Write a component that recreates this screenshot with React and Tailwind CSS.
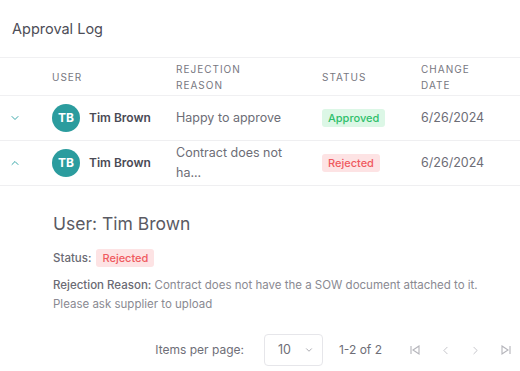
import React, { useState } from 'react';
import { ChevronDown, ChevronUp, ChevronLeft, ChevronRight } from 'lucide-react';

const rows = [
  { id: 1, name: 'Tim Brown', initials: 'TB', reason: 'Happy to approve', status: 'Approved', date: '6/26/2024' },
  { id: 2, name: 'Tim Brown', initials: 'TB', reason: 'Contract does not ha...', status: 'Rejected', date: '6/26/2024',
    full: 'Contract does not have the a SOW document attached to it. Please ask supplier to upload' },
];

const cols = 'grid grid-cols-[52px_124px_146px_99px_1fr]';

function Badge({ status }) {
  const approved = status === 'Approved';
  return (
    <span className={`inline-flex items-center h-[18px] px-[6px] rounded-[3px] text-[11px] font-medium ${approved ? 'bg-[#dcf7e6] text-[#2fbf6b]' : 'bg-[#fde3e4] text-[#ef5a5f]'}`}>
      {status}
    </span>
  );
}

export default function App() {
  const [open, setOpen] = useState(2);

  return (
    <div className="w-[520px] h-[371px] bg-white font-['Inter',sans-serif] text-[#55555f] overflow-hidden">
      <div className="h-[57px] flex items-center px-[12px]">
        <h1 className="text-[14.5px] text-[#4d4d57]">Approval Log</h1>
      </div>

      {/* header */}
      <div className={`${cols} h-[39px] items-center border-y border-[#f0f0f2] text-[10px] tracking-[0.1em] text-[#77777f] leading-[16px]`}>
        <div />
        <div>USER</div>
        <div>REJECTION<br />REASON</div>
        <div>STATUS</div>
        <div>CHANGE<br />DATE</div>
      </div>

      {rows.map((r) => (
        <div key={r.id}>
          <div className={`${cols} h-[45px] items-center border-b border-[#efeff1] text-[12.5px]`}>
            <button onClick={() => setOpen(open === r.id ? null : r.id)} className="pl-[9px] text-[#3aa8aa]">
              {open === r.id ? <ChevronUp size={12} strokeWidth={2} /> : <ChevronDown size={12} strokeWidth={2} />}
            </button>
            <div className="flex items-center gap-[9px]">
              <div className="w-[28px] h-[28px] rounded-full bg-[#2b9c9e] text-white text-[12px] font-bold flex items-center justify-center">
                {r.initials}
              </div>
              <span className="font-semibold text-[#4a4a55] text-[12px]">{r.name}</span>
            </div>
            <div className="leading-[20px] pr-[18px] text-[#6d6d76]">{r.reason}</div>
            <div><Badge status={r.status} /></div>
            <div className="text-[#6d6d76]">{r.date}</div>
          </div>

          {open === r.id && r.full && (
            <div className="pl-[53px] pr-[20px] pt-[25px] pb-[10px]">
              <div className="text-[17.5px] text-[#5a5a63]">User: {r.name}</div>
              <div className="flex items-center gap-[5px] mt-[12px] text-[11.5px] text-[#6a6a73]">
                <span className="font-medium">Status:</span>
                <Badge status={r.status} />
              </div>
              <div className="mt-[9px] text-[11.5px] leading-[19px] text-[#8a8a92]">
                <b className="font-medium text-[#6a6a73]">Rejection Reason:</b> {r.full}
              </div>
            </div>
          )}
        </div>
      ))}

      {/* pagination */}
      <div className="flex items-center justify-end pr-[7px] mt-[10px] text-[12px] text-[#6e6e77]">
        <span>Items per page:</span>
        <div className="ml-[20px] w-[59px] h-[32px] border border-[#e6e6ea] rounded-[4px] flex items-center pl-[13px] gap-[13px]">
          <span className="text-[12.5px]">10</span>
          <ChevronDown size={10} className="text-[#9a9aa2]" />
        </div>
        <span className="ml-[16px]">1-2 of 2</span>
        <div className="flex items-center ml-[26px] gap-[17px] text-[#b4b4ba]">
          <svg width="14" height="14" viewBox="0 0 14 14" fill="none" stroke="currentColor" strokeWidth="1.1">
            <path d="M3 3v8M11 3L5 7l6 4z" />
          </svg>
          <ChevronLeft size={13} strokeWidth={1.4} />
          <ChevronRight size={13} strokeWidth={1.4} />
          <svg width="14" height="14" viewBox="0 0 14 14" fill="none" stroke="currentColor" strokeWidth="1.1">
            <path d="M11 3v8M3 3l6 4-6 4z" />
          </svg>
        </div>
      </div>
    </div>
  );
}
